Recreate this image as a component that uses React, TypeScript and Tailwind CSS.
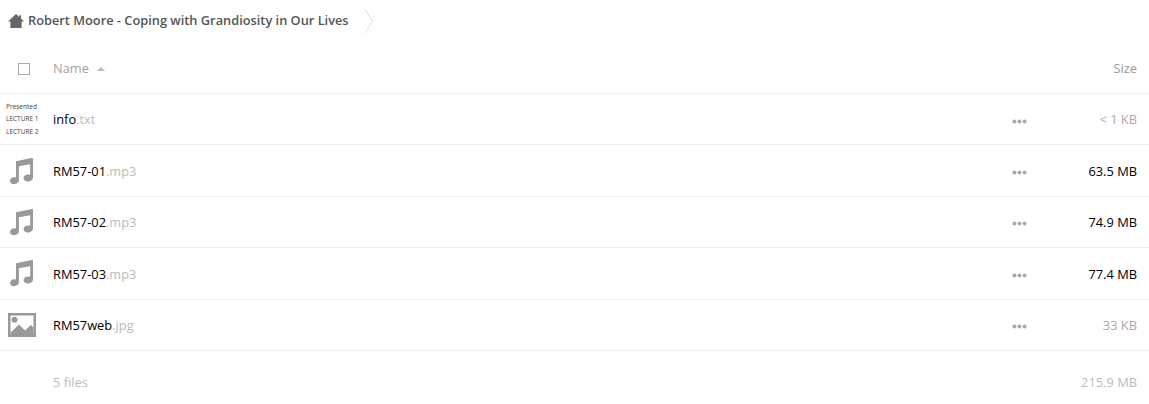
const files = [
  { base: "info", ext: ".txt", size: "< 1 KB", kind: "text", dim: true },
  { base: "RM57-01", ext: ".mp3", size: "63.5 MB", kind: "audio", dim: false },
  { base: "RM57-02", ext: ".mp3", size: "74.9 MB", kind: "audio", dim: false },
  { base: "RM57-03", ext: ".mp3", size: "77.4 MB", kind: "audio", dim: false },
  { base: "RM57web", ext: ".jpg", size: "33 KB", kind: "image", dim: true },
];

function HomeIcon() {
  return (
    <svg width="16" height="14" viewBox="0 0 16 14" className="shrink-0">
      <path d="M8 0 L11.2 2.9 V1.2 H13 V4.5 L16 7.6 H13.6 V14 H2.4 V7.6 H0 Z" fill="#666" />
    </svg>
  );
}

function MusicIcon() {
  return (
    <svg width="23" height="28" viewBox="1.8 2.8 23.8 27.2">
      <path
        d="M8 6.2 L24.4 3 Q25.6 2.8 25.6 4 V22.5 C25.6 25.4 23 27.2 20.4 27.2 C17.8 27.2 15.8 25.8 15.8 23.7 C15.8 21.6 17.9 20 20.6 20 C21.4 20 22.1 20.1 22.7 20.4 V9.4 L11 11.6 V26 C11 28.6 8.4 30 6 30 C3.4 30 1.8 28.6 1.8 26.5 C1.8 24.4 3.8 22.8 6.2 22.8 C7 22.8 7.6 22.9 8 23.2 Z"
        fill="#999"
      />
    </svg>
  );
}

function ImageIcon() {
  return (
    <svg width="28" height="24" viewBox="0 0 28 24">
      <path fillRule="evenodd" d="M0 0 H28 V24 H0 Z M2.5 2.5 V21.5 H25.5 V2.5 Z" fill="#999" />
      <circle cx="6.5" cy="6.8" r="3" fill="#999" />
      <path d="M2.5 19.5 L11 11.5 L17 17.5 L23 12 L25.5 14.5 V22 H2.5 Z" fill="#999" />
    </svg>
  );
}

function TextPreview() {
  return (
    <div className="w-[36px] pt-px text-[6.5px] leading-[12.5px] whitespace-nowrap text-[#444]">
      <div>Presented</div>
      <div>LECTURE 1</div>
      <div>LECTURE 2</div>
    </div>
  );
}

export default function App() {
  return (
    <div className="h-[404px] w-[1149px] overflow-hidden bg-white font-['Open_Sans',sans-serif] text-[12.85px]">
      <nav className="flex h-[42px] items-center pl-2">
        <HomeIcon />
        <span className="ml-1 text-[12.8px] font-semibold text-[#555]">Robert Moore - Coping with Grandiosity in Our Lives</span>
        <svg width="10" height="26" viewBox="0 0 10 26" className="ml-[15px]">
          <path d="M1 1 L8.5 13 L1 25" fill="none" stroke="#ddd" />
        </svg>
      </nav>

      <div className="flex h-[52px] items-center border-b border-[#eee] pr-3 pt-[2px] text-[#999]">
        <div className="flex w-[53px] shrink-0 pl-[18px]">
          <span className="h-3 w-3 border border-[#aaa] bg-white" />
        </div>
        <span className="text-[#a8a29e]">Name</span>
        <svg width="8" height="4" viewBox="0 0 8 4" className="ml-2">
          <path d="M4 0 L8 4 H0 Z" fill="#bbb" />
        </svg>
        <span className="ml-auto">Size</span>
      </div>

      {files.map((f) => {
        const textPad = f.kind === "text" ? "pt-0" : "pt-[2px]";
        return (
          <div key={f.base} className="flex h-[51.4px] items-center border-b border-[#eee] pr-3">
            <div className="flex w-[53px] shrink-0 pl-[6px]">
              {f.kind === "text" && <TextPreview />}
              {f.kind === "audio" && (
                <div className="pl-[4px]">
                  <MusicIcon />
                </div>
              )}
              {f.kind === "image" && (
                <div className="pl-[2px]">
                  <ImageIcon />
                </div>
              )}
            </div>
            <span className={`${textPad} text-black`}>{f.base}</span>
            <span className={`${textPad} text-[#bbb]`}>{f.ext}</span>
            <svg width="15" height="5" viewBox="0 0 15 5" className="ml-auto mt-1">
              <circle cx="2.4" cy="2.5" r="2" fill="#aaa" />
              <circle cx="7.5" cy="2.5" r="2" fill="#aaa" />
              <circle cx="12.6" cy="2.5" r="2" fill="#aaa" />
            </svg>
            <span className={`w-[110px] ${textPad} text-right ${f.dim ? "text-[#aaa]" : "text-black"}`}>{f.size}</span>
          </div>
        );
      })}

      <div className="flex h-[53px] items-center pl-[53px] pr-3 pt-[10px] text-[#bbb]">
        <span>5 files</span>
        <span className="ml-auto">215.9 MB</span>
      </div>
    </div>
  );
}
